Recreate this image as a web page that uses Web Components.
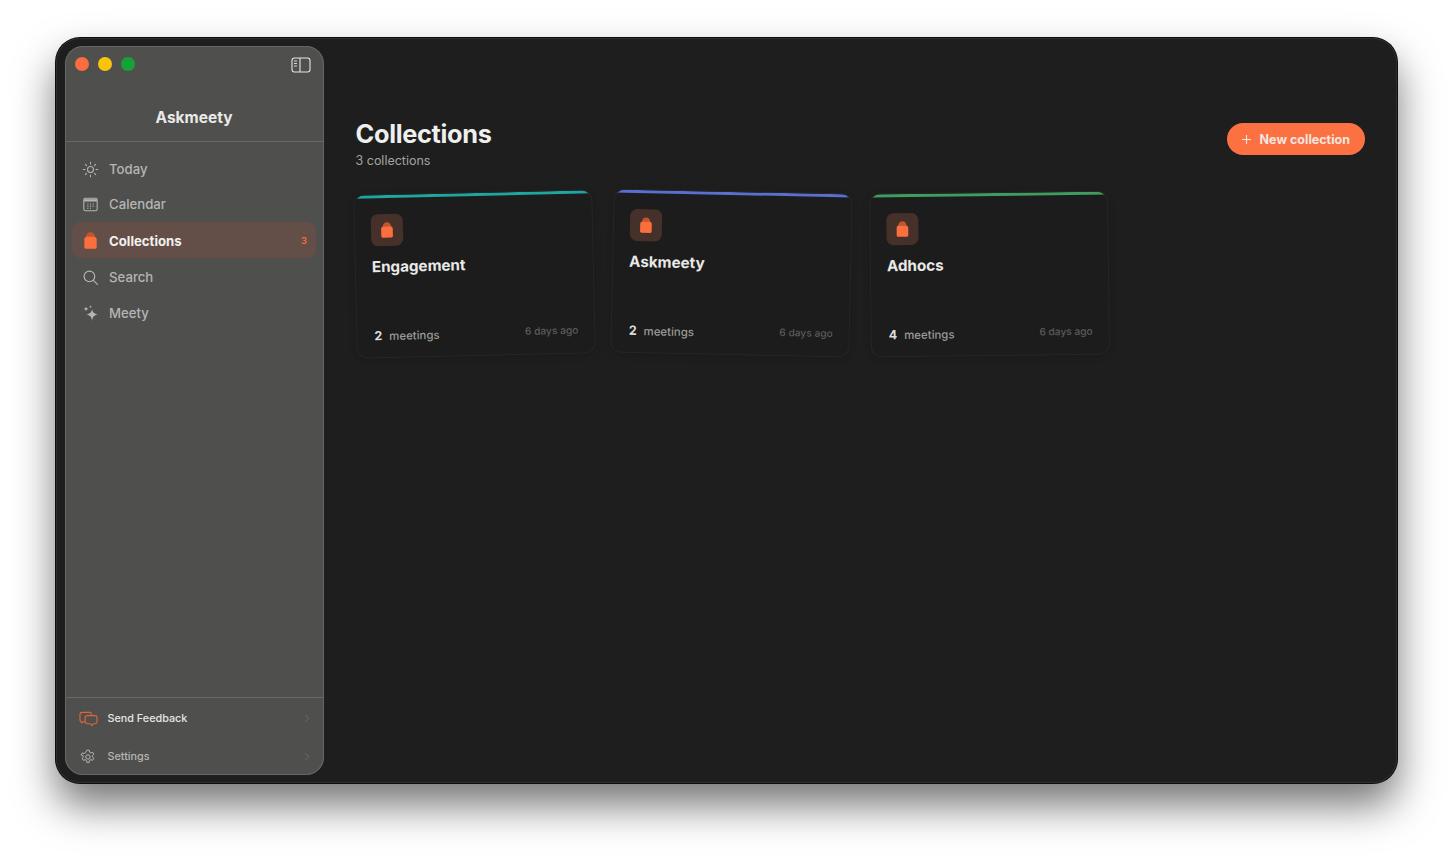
<!DOCTYPE html>
<html lang="en"><head><meta charset="utf-8"><title>Askmeety</title>
<style>
html,body{margin:0;height:857px;background:#fff;overflow:hidden;font-family:Inter,"Liberation Sans",sans-serif}
</style></head><body>
<app-window>
  <side-bar slot="side">
    <nav-item slot="nav" icon="sun" label="Today"></nav-item>
    <nav-item slot="nav" icon="calendar" label="Calendar" h="34" style="margin-bottom:1px"></nav-item>
    <nav-item slot="nav" icon="jar" label="Collections" badge="3" active></nav-item>
    <nav-item slot="nav" icon="search" label="Search" style="margin-top:1px"></nav-item>
    <nav-item slot="nav" icon="sparkle" label="Meety"></nav-item>
    <foot-item slot="foot" icon="chat" label="Send Feedback" bright></foot-item>
    <foot-item slot="foot" icon="gear" label="Settings"></foot-item>
  </side-bar>
  <page-main slot="main">
    <collection-card title-text="Engagement" count="2" accent="#1fa6a0" tilt="-1.300"></collection-card>
    <collection-card title-text="Askmeety" count="2" accent="#5a6fd0" tilt="1.200" style="margin-top:-1px"></collection-card>
    <collection-card title-text="Adhocs" count="4" accent="#3f9e5f" tilt="-0.700"></collection-card>
  </page-main>
</app-window>
<script>
const ICONS={
sun:'<svg viewBox="0 0 16 16" fill="none" stroke="currentColor" stroke-width="1" stroke-linecap="round"><circle cx="8" cy="8" r="2.8"/><path d="M8 1.200v1.600M8 13.200v1.600M1.200 8h1.600M13.200 8h1.600M3.200 3.200l1.100 1.100M11.700 11.700l1.100 1.100M3.200 12.800l1.100-1.100M11.700 4.300l1.100-1.100"/></svg>',
calendar:'<svg viewBox="0 0 16 16" fill="none" stroke="currentColor" stroke-width="1"><rect x="1.700" y="2.200" width="12.600" height="11.600" rx="1.600"/><path d="M2 3h12v2.200H2z" fill="currentColor" stroke="none"/><path d="M5 7.500h1M7.500 7.500h1M10 7.500h1M5 9.500h1M7.500 9.500h1M10 9.500h1M5 11.500h1M7.500 11.500h1"/></svg>',
jar:'<svg viewBox="0 0 16 16"><path d="M3.800 4.600C4.100 1.800 5.600.3 8 .3s3.900 1.500 4.200 4.300z" fill="#c4552f"/><path d="M2.200 6.800C2.200 5.400 3.100 4.400 4.400 4.400h7.200c1.300 0 2.200 1 2.200 2.400v7.200c0 1-.6 1.700-1.500 1.700H3.700c-.9 0-1.500-.7-1.500-1.700z" fill="#fb6f3f"/></svg>',
search:'<svg viewBox="0 0 16 16" fill="none" stroke="currentColor" stroke-width="1.100" stroke-linecap="round"><circle cx="7" cy="7" r="5"/><path d="M10.700 10.700l3.800 3.800"/></svg>',
sparkle:'<svg viewBox="0 0 16 16" fill="currentColor"><path d="M9.500 3.800c.5 3.100 1.900 4.600 5.500 5.200-3.600.6-5 2.100-5.500 6-.5-3.900-1.900-5.400-5.500-6 3.600-.6 5-2.100 5.500-5.200z"/><path d="M3.800 1.500c.2 1.300.9 2 2.200 2.200-1.300.2-2 .9-2.200 2.300-.2-1.400-.9-2.100-2.200-2.300 1.300-.2 2-.9 2.200-2.200z"/><circle cx="8" cy="1.600" r=".8"/></svg>',
chat:'<svg viewBox="0 0 20 16" fill="none" stroke="#e0643a" stroke-width="1.200" stroke-linejoin="round"><path d="M6 11H3.500l-.6 1.300L2.200 10.800C1.400 10.500 1 9.800 1 9V3c0-1.100.9-2 2-2h8c1.100 0 2 .9 2 2v1.500"/><path d="M8.500 4.500H17c1.100 0 2 .9 2 2v4.500c0 1.100-.9 2-2 2h-2l-1.500 2-1.500-2H8.500c-1.100 0-2-.9-2-2V6.500c0-1.100.9-2 2-2z"/></svg>',
gear:'<svg viewBox="0 0 16 16" fill="none" stroke="currentColor" stroke-width="1" stroke-linejoin="round"><circle cx="8" cy="8" r="2.200"/><path d="M6.800 1.200h2.400l.4 2 1.200.7 1.900-.6 1.200 2.100-1.500 1.300v1.200l1.500 1.300-1.200 2.100-1.900-.6-1.200.7-.4 2H6.800l-.4-2-1.200-.7-1.900.6-1.200-2.100 1.500-1.300V7.300L1.100 6l1.200-2.100 1.900.6 1.200-.7z"/></svg>'
};
const def=(n,html)=>{customElements.define(n,class extends HTMLElement{
  constructor(){super();this.attachShadow({mode:'open'})}
  connectedCallback(){this.shadowRoot.innerHTML=html(this)}
})};
def('app-window',()=>`<style>
:host{display:flex;box-sizing:border-box;width:1453px;height:857px;padding:38px 56px 74px}
.win{flex:1;display:flex;box-sizing:border-box;padding:8px 0 8.5px 8.5px;background:#1e1e1e;border-radius:24px;
box-shadow:0 0 0 1px #0c0c0c,inset 0 0 0 1px #2e2e2e,0 22px 42px rgba(0,0,0,.55)}
</style><div class="win"><slot name="side"></slot><slot name="main"></slot></div>`);
def('side-bar',()=>`<style>
:host{display:flex;flex-direction:column;box-sizing:border-box;width:259px;background:#4f4f4e;border-radius:18px;
box-shadow:inset 0 0 0 1px #666665;color:#b5b5b3;font:500 13px Inter,"Liberation Sans",sans-serif}
.top{display:flex;justify-content:space-between;align-items:flex-start;padding:11px 13px 0 10.500px;height:47px;box-sizing:border-box}
.dots{display:flex;gap:9px}
.dots i{width:14px;height:14px;border-radius:50%}
.brand{height:49px;box-sizing:border-box;padding-top:15px;text-align:center;color:#e9e9e7;font-size:15.500px;font-weight:700;line-height:20px;border-bottom:1px solid #686867}
.nav{flex:1;display:flex;flex-direction:column;padding:9px 7.500px 0 7.500px}
.foot{display:flex;flex-direction:column;gap:2px;padding-top:3px;border-top:1px solid #686867}
svg.p{display:block;width:20px;height:16px}
</style>
<div class="top"><div class="dots"><i style="background:#fb6c3f"></i><i style="background:#fcc30b"></i><i style="background:#16a335"></i></div>
<svg class="p" viewBox="0 0 20 16" fill="none" stroke="#e6e6e4" stroke-width="1.100"><rect x="1" y="1" width="18" height="14" rx="2.500"/><path d="M9 1v14"/><path d="M3 4h3M3 6.500h3M3 9h3" stroke-width=".9"/></svg></div>
<div class="brand">Askmeety</div>
<div class="nav"><slot name="nav"></slot></div>
<div class="foot"><slot name="foot"></slot></div>`);
def('nav-item',h=>{const a=h.hasAttribute('active');return `<style>
:host{display:flex;align-items:center;box-sizing:border-box;height:${h.getAttribute('h')||36}px;padding:0 9px 0 10px;border-radius:9px;
${a?'background:#644f48;color:#f0f0ee;font-weight:700;':''}font-size:13.200px}
.i{width:17px;height:17px;margin-right:10px;flex:none}
.i svg{display:block;width:100%;height:100%}
.l{flex:1;${a?'padding-top:1px;':''}}.b{color:#fb6f3f;font-size:9.500px;font-weight:500}
</style><span class="i">${ICONS[h.getAttribute('icon')]}</span><span class="l">${h.getAttribute('label')}</span>${h.hasAttribute('badge')?`<span class="b">${h.getAttribute('badge')}</span>`:''}`});
def('foot-item',h=>`<style>
:host{display:flex;align-items:center;box-sizing:border-box;height:36px;padding:0 14px;font-size:10.800px;${h.hasAttribute('bright')?'color:#e6e6e4;':'color:#b5b5b3;'}}
.i{width:19px;height:16px;margin-right:10px;flex:none;display:flex;justify-content:center}
.i svg{display:block;height:100%;width:${h.getAttribute('icon')==='gear'?'16px':'19px'}}
.l{flex:1}
.c{width:6px;height:9px;display:block}
</style><span class="i">${ICONS[h.getAttribute('icon')]}</span><span class="l">${h.getAttribute('label')}</span>
<svg class="c" viewBox="0 0 6 10" fill="none" stroke="#6e6e6d" stroke-width="1"><path d="M1 1l4 4-4 4"/></svg>`);
def('page-main',()=>`<style>
:host{flex:1;display:flex;flex-direction:column;box-sizing:border-box;padding:73px 32px 0 32px;color:#f0f0ee;font-family:Inter,"Liberation Sans",sans-serif}
.head{display:flex;justify-content:space-between;align-items:flex-start}
h1{margin:-1px 0 0;font-size:25.300px;font-weight:700;line-height:32px;letter-spacing:-.3px;color:#efefed}
p{margin:3px 0 0;font-size:12.500px;line-height:16px;color:#a3a3a1}
button{display:flex;align-items:center;gap:8px;border:0;height:32px;margin-top:4px;padding:0 15px 0 14px;border-radius:16px;background:#fb7141;color:#f3e6e0;font:700 12.500px Inter,"Liberation Sans",sans-serif}
button svg{width:11px;height:11px;display:block}
.grid{display:flex;align-items:flex-start;gap:20.500px;margin-top:24px}
</style>
<div class="head"><div><h1>Collections</h1><p>3 collections</p></div>
<button><svg viewBox="0 0 11 11" stroke="#f3e6e0" stroke-width="1.100"><path d="M5.500 1v9M1 5.500h9"/></svg>New collection</button></div>
<div class="grid"><slot></slot></div>`);
def('collection-card',h=>`<style>
:host{display:flex;flex-direction:column;box-sizing:border-box;width:237px;height:162px;padding:19px 16px 14px;border-radius:10px;
background:#1c1c1c;box-shadow:0 0 0 1px #262626,0 2px 8px rgba(0,0,0,.18);position:relative;overflow:hidden;
transform:rotate(${h.getAttribute('tilt')}deg)}
.bar{position:absolute;left:0;right:0;top:0;height:3px;background:${h.getAttribute('accent')}}
.ic{width:32px;height:32px;border-radius:7px;background:#45302a;display:flex;align-items:center;justify-content:center}
.ic svg{width:16px;height:16px;display:block}
h3{margin:11px 0 0;font-size:15.200px;line-height:20px;font-weight:700;color:#e9e9e7;flex:1}
.r{display:flex;align-items:baseline}
b{font-size:12.500px;color:#dedede;margin:0 7px 0 1px}
.m{font-size:11.400px;font-weight:500;color:#9a9a98;flex:1}
.d{font-size:10.200px;font-weight:500;color:#5b5b5a;position:relative;top:-2px}
</style><div class="bar"></div><div class="ic">${ICONS.jar}</div><h3>${h.getAttribute('title-text')}</h3>
<div class="r"><b>${h.getAttribute('count')}</b><span class="m">meetings</span><span class="d">6 days ago</span></div>`);
</script>
</body></html>
